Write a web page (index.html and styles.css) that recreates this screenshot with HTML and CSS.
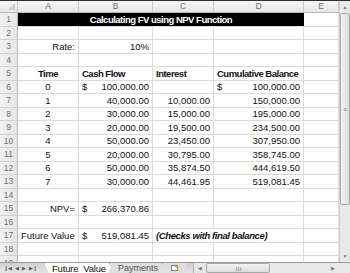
FILE: index.html
```html
<!DOCTYPE html>
<html lang="en">
<head>
    <meta charset="UTF-8">
    <title>Calculating FV using NPV Function</title>
    <link rel="stylesheet" href="styles.css">
</head>
<body>
    <div class="window">
        <div class="main">
            <div class="grid">
                <!-- column headers -->
                <div class="hd corner"><span class="tri"></span></div>
                <div class="hd">A</div>
                <div class="hd">B</div>
                <div class="hd">C</div>
                <div class="hd">D</div>
                <div class="hd">E</div>

                <div class="rh">1</div>
                <div class="title">Calculating FV using NPV Function</div>
                <div class="c"></div>

                <div class="rh">2</div>
                <div class="c"></div><div class="c"></div><div class="c"></div><div class="c"></div><div class="c"></div>

                <div class="rh">3</div>
                <div class="c r">Rate:</div>
                <div class="c r">10%</div>
                <div class="c"></div><div class="c"></div><div class="c"></div>

                <div class="rh">4</div>
                <div class="c"></div><div class="c"></div><div class="c"></div><div class="c"></div><div class="c"></div>

                <div class="rh">5</div>
                <div class="c b ctr">Time</div>
                <div class="c b">Cash Flow</div>
                <div class="c b">Interest</div>
                <div class="c b">Cumulative Balance</div>
                <div class="c"></div>

                <div class="rh">6</div>
                <div class="c ctr">0</div>
                <div class="c acc"><span>$</span><span>100,000.00</span></div>
                <div class="c"></div>
                <div class="c acc"><span>$</span><span>100,000.00</span></div>
                <div class="c"></div>

                <div class="rh">7</div>
                <div class="c ctr">1</div>
                <div class="c r">40,000.00</div>
                <div class="c r">10,000.00</div>
                <div class="c r">150,000.00</div>
                <div class="c"></div>

                <div class="rh">8</div>
                <div class="c ctr">2</div>
                <div class="c r">30,000.00</div>
                <div class="c r">15,000.00</div>
                <div class="c r">195,000.00</div>
                <div class="c"></div>

                <div class="rh">9</div>
                <div class="c ctr">3</div>
                <div class="c r">20,000.00</div>
                <div class="c r">19,500.00</div>
                <div class="c r">234,500.00</div>
                <div class="c"></div>

                <div class="rh">10</div>
                <div class="c ctr">4</div>
                <div class="c r">50,000.00</div>
                <div class="c r">23,450.00</div>
                <div class="c r">307,950.00</div>
                <div class="c"></div>

                <div class="rh">11</div>
                <div class="c ctr">5</div>
                <div class="c r">20,000.00</div>
                <div class="c r">30,795.00</div>
                <div class="c r">358,745.00</div>
                <div class="c"></div>

                <div class="rh">12</div>
                <div class="c ctr">6</div>
                <div class="c r">50,000.00</div>
                <div class="c r">35,874.50</div>
                <div class="c r">444,619.50</div>
                <div class="c"></div>

                <div class="rh">13</div>
                <div class="c ctr">7</div>
                <div class="c r">30,000.00</div>
                <div class="c r">44,461.95</div>
                <div class="c r">519,081.45</div>
                <div class="c"></div>

                <div class="rh">14</div>
                <div class="c"></div><div class="c"></div><div class="c"></div><div class="c"></div><div class="c"></div>

                <div class="rh">15</div>
                <div class="c r">NPV=</div>
                <div class="c acc"><span>$</span><span>266,370.86</span></div>
                <div class="c"></div><div class="c"></div><div class="c"></div>

                <div class="rh">16</div>
                <div class="c"></div><div class="c"></div><div class="c"></div><div class="c"></div><div class="c"></div>

                <div class="rh">17</div>
                <div class="c">Future Value</div>
                <div class="c acc"><span>$</span><span>519,081.45</span></div>
                <div class="c note">(Checks with final balance)</div>
                <div class="c"></div><div class="c"></div>

                <div class="rh">18</div>
                <div class="c"></div><div class="c"></div><div class="c"></div><div class="c"></div><div class="c"></div>

                <div class="rh last">19</div>
                <div class="c"></div><div class="c"></div><div class="c"></div><div class="c"></div><div class="c"></div>
            </div>

            <div class="vscroll">
                <div class="arrow">&#9650;</div>
                <div class="thumb v"><span class="grip">&#8801;</span></div>
                <div class="track"></div>
                <div class="arrow">&#9660;</div>
            </div>
        </div>

        <div class="tabbar">
            <div class="nav">
                <span>&#10073;&#9664;</span>
                <span>&#9664;</span>
                <span>&#9654;</span>
                <span>&#9654;&#10073;</span>
            </div>
            <div class="tab active">Future_Value</div>
            <div class="tab">Payments</div>
            <div class="tab newtab">
                <svg width="10" height="8" viewBox="0 0 10 8">
                    <rect x="1.5" y="1.5" width="6" height="5" fill="#fff" stroke="#888"/>
                    <path d="M7 0 L8 2 L10 2.5 L8 3 L7 5 L6 3 L4 2.5 L6 2 Z" fill="#e0a020"/>
                </svg>
            </div>
            <div class="split"></div>
            <div class="hscroll">
                <div class="harrow">&#9664;</div>
                <div class="thumb h"><span class="grip">&#10073;&#10073;&#10073;</span></div>
                <div class="htrack"></div>
                <div class="harrow">&#9654;</div>
            </div>
            <div class="sizer"></div>
        </div>
    </div>
</body>
</html>
```

FILE: styles.css
```css
/* Spreadsheet window */
body {
    margin: 0;
    padding: 0;
    overflow: hidden;
    background: #ffffff;
    font-family: 'Liberation Sans', Arial, sans-serif;
}

.window {
    width: 350px;
    height: 273px;
    border-top: 1px solid #303030;
    box-sizing: border-box;
    display: flex;
    flex-direction: column;
    overflow: hidden;
}

.main {
    display: flex;
    height: 261px;
    overflow: hidden;
}

.grid {
    display: grid;
    grid-template-columns: 18px 61px 74px 61px 90px 35px;
    grid-template-rows: 12px;
    grid-auto-rows: 13.5px;
    width: 339px;
    font-size: 9.5px;
    color: #111;
}

.hd {
    background: linear-gradient(#f6f6f6, #e6e6e6);
    border-right: 1px solid #c9c9c9;
    border-bottom: 1px solid #b8b8b8;
    color: #6f6f6f;
    font-size: 8.5px;
    text-align: center;
    line-height: 11px;
    box-sizing: border-box;
}

.corner {
    position: relative;
}

.corner .tri {
    position: absolute;
    right: 2px;
    bottom: 2px;
    width: 0;
    height: 0;
    border-left: 7px solid transparent;
    border-bottom: 7px solid #cfcfcf;
}

.rh {
    background: linear-gradient(90deg, #f2f2f2, #e6e6e6);
    border-right: 1px solid #b8b8b8;
    border-bottom: 1px solid #d2d2d2;
    color: #6f6f6f;
    font-size: 8.5px;
    text-align: center;
    box-sizing: border-box;
    display: flex;
    align-items: center;
    justify-content: center;
}

.rh.last {
    align-items: flex-start;
    padding-top: 3px;
    line-height: 8px;
}

.c {
    border-right: 1px solid #dcdcdc;
    border-bottom: 1px solid #dcdcdc;
    box-sizing: border-box;
    padding: 0 3px;
    display: flex;
    align-items: center;
    white-space: nowrap;
    overflow: visible;
}

.r { justify-content: flex-end; }
.ctr { justify-content: center; }
.b { font-weight: bold; letter-spacing: -0.5px; }

.acc {
    justify-content: space-between;
}

.note {
    font-weight: bold;
    font-style: italic;
    border-right: none;
    letter-spacing: -0.4px;
}

.title {
    grid-column: span 4;
    background: #000;
    color: #fff;
    font-weight: bold;
    letter-spacing: -0.5px;
    display: flex;
    align-items: center;
    justify-content: center;
    border-bottom: 1px solid #dcdcdc;
}

/* vertical scrollbar */
.vscroll {
    width: 11px;
    background: #e8e8e8;
    border-left: 1px solid #cfcfcf;
    box-sizing: border-box;
    display: flex;
    flex-direction: column;
}

.arrow {
    height: 12px;
    font-size: 5px;
    color: #777;
    text-align: center;
    line-height: 12px;
}

.thumb {
    background: linear-gradient(90deg, #f4f4f4, #dcdcdc);
    border: 1px solid #a9a9a9;
    border-radius: 2px;
    box-sizing: border-box;
    display: flex;
    align-items: center;
    justify-content: center;
}

.thumb.v {
    height: 192px;
}

.grip {
    font-size: 7px;
    color: #888;
}

.track {
    flex: 1;
}

/* sheet tabs */
.tabbar {
    height: 11px;
    flex: 1;
    background: linear-gradient(#d0d0d0, #e4e4e4);
    border-top: 1px solid #9a9a9a;
    display: flex;
    align-items: stretch;
    font-size: 9px;
    overflow: hidden;
}

.nav {
    width: 40px;
    display: flex;
    justify-content: space-around;
    align-items: center;
    font-size: 5px;
    color: #555;
    padding: 0 2px;
    box-sizing: border-box;
}

.tab {
    padding: 0 8px;
    color: #555;
    background: #dedede;
    border-left: 1px solid #a0a0a0;
    clip-path: polygon(0 0, 100% 0, calc(100% - 5px) 100%, 5px 100%);
    margin-left: -4px;
    display: flex;
    align-items: center;
    white-space: nowrap;
}

.tab.active {
    background: #ffffff;
    color: #111;
    text-decoration: underline;
    margin-left: 4px;
    padding: 0 7px;
    font-size: 9.5px;
    letter-spacing: -0.2px;
}

.newtab {
    padding: 0 7px;
}

.split {
    width: 6px;
}

.hscroll {
    flex: 1;
    display: flex;
    background: #e8e8e8;
    border-left: 1px solid #b0b0b0;
}

.harrow {
    width: 12px;
    font-size: 5px;
    color: #777;
    display: flex;
    align-items: center;
    justify-content: center;
}

.thumb.h {
    width: 64px;
    background: linear-gradient(#f4f4f4, #dcdcdc);
}

.thumb.h .grip {
    font-size: 4px;
    letter-spacing: -1px;
}

.htrack {
    flex: 1;
}

.sizer {
    width: 11px;
    background: #e8e8e8;
}
```
